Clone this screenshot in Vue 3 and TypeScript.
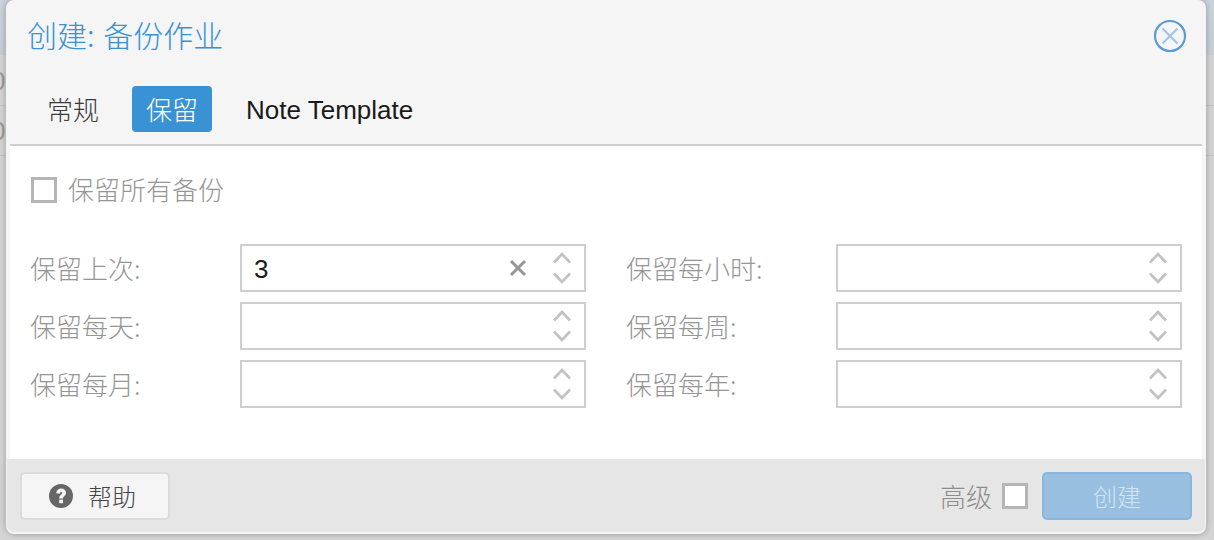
<script setup lang="ts">
interface Field { label: string; value: string }
const rows: Field[][] = [
  [{ label: '保留上次:', value: '3' }, { label: '保留每小时:', value: '' }],
  [{ label: '保留每天:', value: '' }, { label: '保留每周:', value: '' }],
  [{ label: '保留每月:', value: '' }, { label: '保留每年:', value: '' }],
]
const fields: Field[] = rows.flat()
</script>

<template>
  <div class="page">
    <span class="behind first">0</span>
    <span class="behind second">0</span>
    <div class="window">
      <header class="title-bar">
        <span class="title">创建: 备份作业</span>
        <svg class="close" width="34" height="34" viewBox="0 0 34 34" aria-hidden="true">
          <circle cx="17" cy="17" r="15" fill="none" stroke="#5b9bd5" stroke-width="2.2" />
          <path d="M9.5 9.5 L24.5 24.5 M24.5 9.5 L9.5 24.5" stroke="#a3c4ea" stroke-width="2.2" fill="none" />
        </svg>
      </header>
      <nav class="tabs">
        <span class="tab">常规</span>
        <span class="tab active">保留</span>
        <span class="tab latin">Note Template</span>
      </nav>
      <main class="body">
        <label class="keep-all">
          <span class="box"></span>
          <span class="keep-text">保留所有备份</span>
        </label>
        <div class="grid">
          <div v-for="f in fields" :key="f.label" class="field">
            <span class="label">{{ f.label }}</span>
            <div class="input">
              <span class="value">{{ f.value }}</span>
              <svg v-if="f.value" class="clear" width="18" height="18" viewBox="0 0 18 18" aria-hidden="true">
                <path d="M2 2 L16 16 M16 2 L2 16" stroke="#969696" stroke-width="3" fill="none" />
              </svg>
              <svg class="spin" width="18" height="32" viewBox="0 0 18 32" aria-hidden="true">
                <path d="M1 10.5 L9 2 L17 10.5 M1 21.5 L9 30 L17 21.5" stroke="#c2c2c2" stroke-width="2.6" fill="none" />
              </svg>
            </div>
          </div>
        </div>
      </main>
      <footer class="footer">
        <button class="help" type="button">
          <svg width="24" height="24" viewBox="0 0 24 24" aria-hidden="true">
            <circle cx="12" cy="12" r="12" fill="#666" />
            <path d="M7.2 9.2 C7.4 6.2 9.6 4.4 12.2 4.4 C15 4.4 17 6.4 17 8.8 C17 12 14 12.2 14 14.4 L10.2 14.4 C10.2 11 13.2 10.8 13.2 9 C13.2 8.3 12.8 7.9 12.1 7.9 C11.3 7.9 10.9 8.5 10.8 9.7 Z" fill="#f5f5f5" />
            <rect x="10.2" y="15.6" width="3.8" height="3.6" fill="#f5f5f5" />
          </svg>
          <span>帮助</span>
        </button>
        <span class="spacer"></span>
        <span class="advanced">高级</span>
        <span class="box adv-box"></span>
        <button class="create" type="button">创建</button>
      </footer>
    </div>
  </div>
</template>

<style scoped>
.page {
  position: relative;
  width: 1214px;
  height: 540px;
  box-sizing: border-box;
  padding: 0 8px 6px 6px;
  overflow: hidden;
  font-family: "Noto Sans CJK SC", "Liberation Sans", sans-serif;
  font-weight: 300;
  background:
    linear-gradient(#c4c4c4, #c4c4c4) 0 105px / 100% 1px no-repeat,
    linear-gradient(#c4c4c4, #c4c4c4) 0 155px / 100% 1px no-repeat,
    linear-gradient(#ccd3da, #c6ced6) 0 0 / 100% 55px no-repeat,
    #d4d4d4;
}
.behind {
  position: absolute;
  left: -9px;
  font-family: "Liberation Sans", sans-serif;
  font-size: 26px;
  line-height: 26px;
  color: #999;
}
.behind.first { top: 68px; }
.behind.second { top: 118px; }
.window {
  position: relative;
  height: 534px;
  box-sizing: border-box;
  background: #f5f5f5;
  border-radius: 8px;
  box-shadow: 0 0 6px rgba(0, 0, 0, 0.28);
  padding: 0 4px 2px 4px;
  display: flex;
  flex-direction: column;
}
.title-bar {
  height: 72px;
  box-sizing: border-box;
  padding: 0 0 0 17px;
  flex: none;
  display: flex;
  align-items: center;
  justify-content: space-between;
}
.title {
  font-size: 30px;
  line-height: 36px;
  margin-top: -4px;
  word-spacing: 2px;
  color: #3892d4;
}
.close {
  margin-right: 15px;
  filter: blur(0.5px);
}
.tabs {
  height: 74px;
  box-sizing: border-box;
  flex: none;
  display: flex;
  align-items: flex-start;
  padding: 14px 0 0 23px;
  gap: 18px;
  border-bottom: 2px solid #cfcfcf;
}
.tab {
  height: 46px;
  line-height: 46px;
  padding: 0 14px;
  font-size: 26px;
  color: #3a3a3a;
  border-radius: 4px;
}
.tab.active {
  background: #3892d4;
  color: #fff;
  margin-left: 1px;
}
.tab.latin {
  font-family: "Liberation Sans", sans-serif;
  font-weight: 400;
  color: #1a1a1a;
  font-size: 26px;
  padding: 1px 0 0 16px;
}
.body {
  flex: 1;
  background: #fff;
  padding: 28px 20px 0 21px;
  color: #969696;
  font-size: 26px;
}
.keep-all {
  display: flex;
  align-items: center;
  gap: 11px;
  height: 32px;
  line-height: 32px;
}
.keep-text { margin-top: -2px; }
.box {
  width: 26px;
  height: 26px;
  box-sizing: border-box;
  border: 3px solid #b5b5b5;
  background: #fff;
  flex: none;
}
.grid {
  margin-top: 38px;
  display: grid;
  grid-template-columns: 555px 555px;
  column-gap: 41px;
  row-gap: 10px;
}
.field {
  display: flex;
  align-items: center;
  height: 48px;
}
.label {
  width: 209px;
  flex: none;
  margin: -2px 0 0 -1px;
  padding-right: 1px;
}
.input {
  flex: 1;
  height: 48px;
  box-sizing: border-box;
  border: 2px solid #cfcfcf;
  display: flex;
  align-items: center;
  padding: 0 13px 0 12px;
  background: #fff;
}
.value {
  flex: 1;
  margin-top: 2px;
  font-family: "Liberation Sans", sans-serif;
  font-weight: 400;
  font-size: 26px;
  color: #1a1a1a;
}
.clear { margin-right: 26px; }
.footer {
  height: 73px;
  flex: none;
  background: #e6e6e6;
  border-radius: 0 0 7px 7px;
  margin: 0 -3px;
  display: flex;
  align-items: center;
  padding: 0 13px 0 13px;
  box-sizing: border-box;
  font-size: 26px;
}
.help {
  width: 150px;
  height: 48px;
  box-sizing: border-box;
  border: 2px solid #dcdcdc;
  border-radius: 5px;
  background: #f5f5f5;
  display: flex;
  align-items: center;
  gap: 15px;
  padding: 0 0 0 27px;
  font: inherit;
  font-size: 24px;
  color: #444;
}
.spacer { flex: 1; }
.advanced { color: #8c8c8c; }
.adv-box { margin: 0 14px 0 10px; }
.create {
  width: 150px;
  height: 48px;
  box-sizing: border-box;
  border: 2px solid #8ab6df;
  border-radius: 5px;
  background: #98bee0;
  color: #d5e4f2;
  font: inherit;
  font-size: 24px;
}
</style>
